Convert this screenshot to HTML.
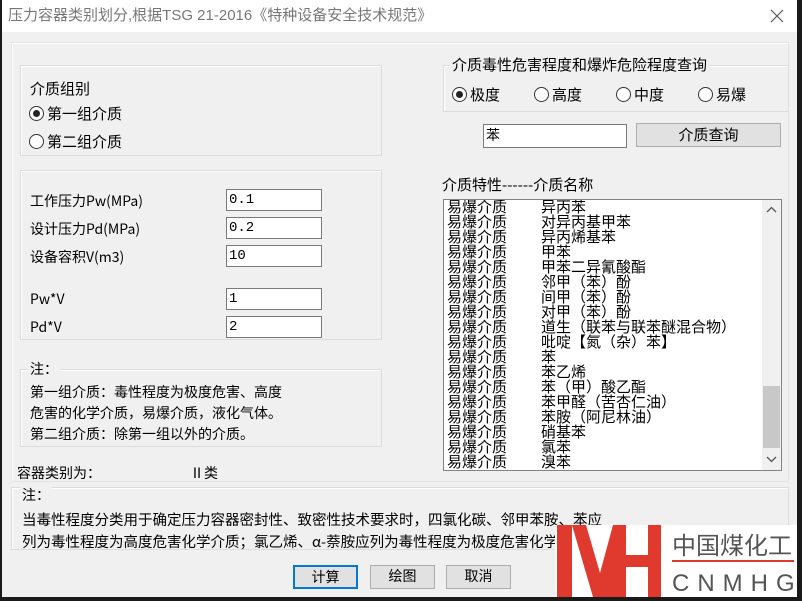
<!DOCTYPE html>
<html><head><meta charset="utf-8"><style>
*{margin:0;padding:0;box-sizing:border-box}
body{width:802px;height:601px;background:#1a1a1a;position:relative;overflow:hidden;font-family:"Liberation Sans","Noto Sans CJK SC",sans-serif;color:#000}
.win{position:absolute;left:2px;top:0;width:795px;height:597px;background:#f0f0f0}
.title{position:absolute;left:0;top:0;width:795px;height:32px;background:#fff;color:#777;font-size:15px;line-height:32px;padding-left:6px}
.x{position:absolute;left:766px;top:7px}
.a{position:absolute;white-space:nowrap}
.grp{position:absolute;border:1px solid #dcdcdc;box-shadow:inset 1px 1px 0 #fff}
.t{font-size:14px;font-family:"Noto Sans CJK SC","WenQuanYi Zen Hei",sans-serif;line-height:16px}
.radio{display:inline-block;width:15px;height:15px;border:1px solid #333;border-radius:50%;background:#fff;vertical-align:-2px;margin-right:3px;position:relative}
.radio.on::after{content:"";position:absolute;left:3px;top:3px;width:7px;height:7px;border-radius:50%;background:#222}
.inp{position:absolute;background:#fff;border:1px solid #7a7a7a;font-family:"Liberation Mono","WenQuanYi Zen Hei",monospace;font-size:14px;line-height:20px;padding-left:2px}
.btn{position:absolute;background:#e1e1e1;border:1px solid #adadad;text-align:center;font-size:14px;font-family:"Noto Sans CJK SC",sans-serif;line-height:21px}
.list{position:absolute;left:441px;top:199px;width:339px;height:272px;background:#fff;border:1px solid #828282;overflow:hidden}
.rows{position:absolute;left:3px;top:-1px;font-family:"WenQuanYi Zen Hei","Noto Sans CJK SC",sans-serif;font-size:15px;line-height:15px}
.rows div{height:15px;white-space:nowrap}
.rows span{display:inline-block;width:94px}
.sb{position:absolute;left:318px;top:0;width:19px;height:270px;background:#f0f0f0}
</style></head><body>
<div class="win">
<div class="title">压力容器类别划分,根据TSG 21-2016《特种设备安全技术规范》</div>
<svg class="x" width="18" height="18"><path d="M3 3L15 15M15 3L3 15" stroke="#555" stroke-width="1.2"/></svg>

<div class="grp" style="left:9px;top:42px;width:778px;height:440px;border-color:#e4e4e4"></div>

<div class="grp" style="left:18px;top:65px;width:362px;height:91px"></div>
<div class="a t" style="left:28px;top:81px;font-size:15px">介质组别</div>
<div class="a t" style="left:27px;top:106px;font-size:15px"><span class="radio on"></span>第一组介质</div>
<div class="a t" style="left:27px;top:134px;font-size:15px"><span class="radio"></span>第二组介质</div>

<div class="grp" style="left:18px;top:170px;width:362px;height:170px"></div>
<div class="a t" style="left:28px;top:193px">工作压力Pw(MPa)</div>
<div class="a t" style="left:28px;top:221px">设计压力Pd(MPa)</div>
<div class="a t" style="left:28px;top:249px">设备容积V(m3)</div>
<div class="a t" style="left:28px;top:291px">Pw*V</div>
<div class="a t" style="left:28px;top:319px">Pd*V</div>
<div class="inp" style="left:224px;top:189px;width:96px;height:22px">0.1</div>
<div class="inp" style="left:224px;top:217px;width:96px;height:22px">0.2</div>
<div class="inp" style="left:224px;top:245px;width:96px;height:22px">10</div>
<div class="inp" style="left:224px;top:288px;width:96px;height:22px">1</div>
<div class="inp" style="left:224px;top:316px;width:96px;height:22px">2</div>

<div class="grp" style="left:18px;top:369px;width:362px;height:78px"></div>
<div class="a t" style="left:26px;top:361px;background:#f0f0f0;padding:0 2px">注：</div>
<div class="a t" style="left:28px;top:384px">第一组介质：毒性程度为极度危害、高度</div>
<div class="a t" style="left:28px;top:405px">危害的化学介质，易爆介质，液化气体。</div>
<div class="a t" style="left:28px;top:426px">第二组介质：除第一组以外的介质。</div>

<div class="grp" style="left:441px;top:65px;width:346px;height:47px"></div>
<div class="a t" style="left:448px;top:57px;font-size:15px;background:#f0f0f0;padding:0 2px">介质毒性危害程度和爆炸危险程度查询</div>
<div class="a t" style="left:450px;top:87px;font-size:15px"><span class="radio on"></span>极度</div>
<div class="a t" style="left:532px;top:87px;font-size:15px"><span class="radio"></span>高度</div>
<div class="a t" style="left:614px;top:87px;font-size:15px"><span class="radio"></span>中度</div>
<div class="a t" style="left:696px;top:87px;font-size:15px"><span class="radio"></span>易爆</div>
<div class="inp" style="left:481px;top:124px;width:144px;height:24px;font-family:'WenQuanYi Zen Hei',sans-serif">苯</div>
<div class="btn" style="left:634px;top:123px;width:145px;height:24px;font-size:15px">介质查询</div>

<div class="a t" style="left:440px;top:177px;font-size:15px">介质特性------介质名称</div>
<div class="list"><div class="rows">
<div><span>易爆介质</span>异丙苯</div>
<div><span>易爆介质</span>对异丙基甲苯</div>
<div><span>易爆介质</span>异丙烯基苯</div>
<div><span>易爆介质</span>甲苯</div>
<div><span>易爆介质</span>甲苯二异氰酸酯</div>
<div><span>易爆介质</span>邻甲（苯）酚</div>
<div><span>易爆介质</span>间甲（苯）酚</div>
<div><span>易爆介质</span>对甲（苯）酚</div>
<div><span>易爆介质</span>道生（联苯与联苯醚混合物）</div>
<div><span>易爆介质</span>吡啶【氮（杂）苯】</div>
<div><span>易爆介质</span>苯</div>
<div><span>易爆介质</span>苯乙烯</div>
<div><span>易爆介质</span>苯（甲）酸乙酯</div>
<div><span>易爆介质</span>苯甲醛（苦杏仁油）</div>
<div><span>易爆介质</span>苯胺（阿尼林油）</div>
<div><span>易爆介质</span>硝基苯</div>
<div><span>易爆介质</span>氯苯</div>
<div><span>易爆介质</span>溴苯</div>
</div>
<div class="sb">
<svg style="position:absolute;left:4px;top:6px" width="11" height="8"><path d="M1 6L5.5 1.5L10 6" stroke="#555" fill="none" stroke-width="1.3"/></svg>
<div style="position:absolute;left:1px;top:186px;width:17px;height:62px;background:#c8c8c8"></div>
<svg style="position:absolute;left:4px;top:255px" width="11" height="8"><path d="M1 2L5.5 6.5L10 2" stroke="#555" fill="none" stroke-width="1.3"/></svg>
</div></div>

<div class="a t" style="left:15px;top:465px">容器类别为：</div>
<div class="a t" style="left:188px;top:465px">Ⅱ类</div>

<div class="grp" style="left:9px;top:487px;width:778px;height:63px"></div>
<div class="a t" style="left:18px;top:487px;background:#f0f0f0;padding:0 2px">注：</div>
<div class="a t" style="left:20px;top:512px;font-size:14.5px">当毒性程度分类用于确定压力容器密封性、致密性技术要求时，四氯化碳、邻甲苯胺、苯应</div>
<div class="a t" style="left:20px;top:534px;font-size:14.5px">列为毒性程度为高度危害化学介质；氯乙烯、α-萘胺应列为毒性程度为极度危害化学介质。</div>

<div class="btn" style="left:291px;top:565px;width:65px;height:24px;border:2px solid #0078d7;line-height:20px">计算</div>
<div class="btn" style="left:368px;top:565px;width:65px;height:24px">绘图</div>
<div class="btn" style="left:444px;top:565px;width:65px;height:24px">取消</div>
</div>

<div style="position:absolute;left:555px;top:525px;width:242px;height:72px;background:#fff"></div>
<svg style="position:absolute;left:555px;top:525px" width="242" height="72">
<g fill="#e03a2e">
<rect x="2" y="0" width="15" height="72"/>
<polygon points="17,0 31,0 45,48 45,72 38,72"/>
<polygon points="45,48 58,0 58,72 45,72"/>
<rect x="58" y="0" width="13" height="72"/>
<rect x="58" y="30" width="48" height="12"/>
<rect x="93" y="0" width="13" height="72"/>
</g>
<rect x="117" y="35" width="122" height="2" fill="#e03a2e"/>
<text x="117" y="29" font-family="Noto Sans CJK SC,sans-serif" font-size="24" fill="#555">中国煤化工</text>
<text x="117" y="66" font-family="Liberation Sans,sans-serif" font-size="24" fill="#555" letter-spacing="8">CNMHG</text>
</svg>
</body></html>
